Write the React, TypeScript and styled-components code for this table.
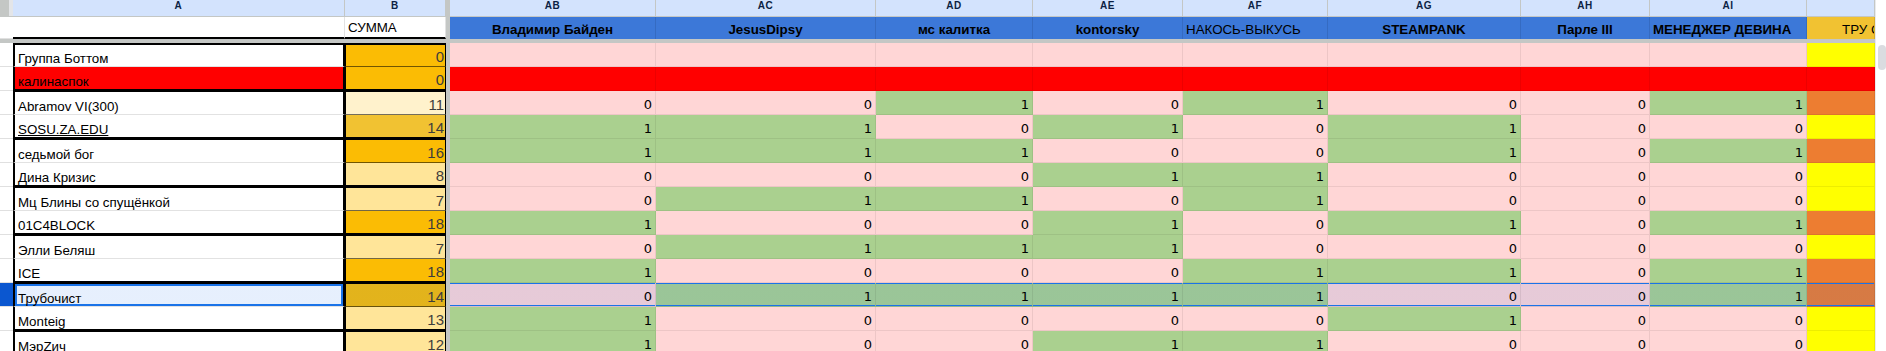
import styled, { createGlobalStyle, css } from "styled-components";

const COLS =
  "13px 332px 101px 4px 206px 220px 157px 150px 145px 193px 129px 157px 68px";

const PINK = "#ffd6d6";
const GREEN = "#aad08f";
const RED = "#ff0000";
const YELLOW = "#ffff00";
const ORANGE = "#ed7d31";

// row selection overlay, as Sheets does it
const selectedTint = css`
  background-image: linear-gradient(
    rgba(14, 101, 235, 0.1),
    rgba(14, 101, 235, 0.1)
  );
`;

const GlobalStyle = createGlobalStyle`
  html, body {
    margin: 0;
    padding: 0;
    background: #fff;
    overflow: hidden;
  }
  body {
    font-family: "Liberation Sans", Arial, sans-serif;
  }
`;

const Page = styled.div`
  display: flex;
  width: 1886px;
  height: 351px;
  overflow: hidden;
`;

const Sheet = styled.div`
  width: 1875px;
  flex-shrink: 0;
  display: flex;
  flex-direction: column;
`;

const Row = styled.div<{ $h: number }>`
  display: grid;
  grid-template-columns: ${COLS};
  height: ${(p) => p.$h}px;
  flex-shrink: 0;
`;

const Corner = styled.div`
  background: linear-gradient(90deg, #c4c7c5 0 9px, #e3e5e8 9px);
  border-bottom: 1px solid #c4c7c5;
  box-sizing: border-box;
`;

const ColLetter = styled.div`
  box-sizing: border-box;
  background: #d3e3fd;
  border-right: 1px solid #c4c7c5;
  border-bottom: 1px solid #c4c7c5;
  display: flex;
  justify-content: center;
  font-family: "Liberation Sans", Arial, sans-serif;
  font-weight: bold;
  font-size: 10px;
  line-height: 12px;
  letter-spacing: 0.6px;
  color: #0b1f44;
`;

const FreezeV = styled.div`
  background: #c4c7c5;
`;

const FreezeH = styled.div`
  height: 4px;
  flex-shrink: 0;
  background: #c4c7c5;
`;

const Gutter = styled.div<{ $selected?: boolean }>`
  box-sizing: border-box;
  background: ${(p) => (p.$selected ? "#0b57d0" : "#fff")};
  border-bottom: 1px solid #e0e0e0;
`;

const TitleCell = styled.div`
  box-sizing: border-box;
  background: #fff;
  border-right: 1px solid #e2e2e2;
  border-bottom: 2px solid #000;
  display: flex;
  align-items: flex-end;
  padding: 0 3px 2px;
  font-size: 13.33px;
  line-height: 15px;
  color: #000;
`;

const VoterHead = styled.div<{ $bold?: boolean; $left?: boolean }>`
  box-sizing: border-box;
  background: #3c78d8;
  border-right: 1px solid rgba(0, 0, 0, 0.1);
  display: flex;
  align-items: flex-end;
  justify-content: ${(p) => (p.$left ? "flex-start" : "center")};
  padding: 0 3px 2px;
  font-size: 13.33px;
  line-height: 15px;
  font-weight: ${(p) => (p.$bold ? "bold" : "normal")};
  color: #000;
  white-space: nowrap;
  overflow: hidden;
`;

const ExtraHead = styled(VoterHead)`
  background: #f1c232;
  justify-content: flex-start;
  padding-left: 35px;
`;

const NameCell = styled.div<{
  $first?: boolean;
  $top?: number;
  $red?: boolean;
  $selected?: boolean;
  $link?: boolean;
}>`
  box-sizing: border-box;
  background-color: ${(p) => (p.$red ? RED : "#fff")};
  border-left: 2px solid #000;
  border-right: 2px solid #000;
  border-top: ${(p) => (p.$first ? `${p.$top ?? 1}px solid #000` : "none")};
  border-bottom: ${(p) => (p.$first ? "1px solid #e2e2e2" : "2px solid #000")};
  display: flex;
  align-items: flex-end;
  padding: 0 3px;
  font-size: 13.33px;
  line-height: 15px;
  color: #000;
  white-space: nowrap;
  overflow: hidden;
  text-decoration: ${(p) => (p.$link ? "underline" : "none")};
  ${(p) =>
    p.$selected &&
    css`
      ${selectedTint};
      box-shadow: inset 0 0 0 2px #1a73e8;
    `}
`;

const SumCell = styled.div<{
  $bg: string;
  $first?: boolean;
  $top?: number;
  $selected?: boolean;
}>`
  box-sizing: border-box;
  background-color: ${(p) => p.$bg};
  border-left: 1px solid #000;
  border-right: 1px solid #000;
  border-top: ${(p) => (p.$first ? `${p.$top ?? 1}px solid #000` : "none")};
  border-bottom: ${(p) =>
    p.$first ? "1px solid rgba(0,0,0,0.55)" : "2px solid #000"};
  display: flex;
  align-items: flex-end;
  justify-content: flex-end;
  padding: 0 1px 1px;
  font-size: 15px;
  line-height: 17px;
  color: #3d3d3d;
  ${(p) => p.$selected && selectedTint};
`;

const VoteCell = styled.div<{ $fill: string; $selected?: boolean }>`
  box-sizing: border-box;
  background-color: ${(p) => p.$fill};
  border-right: 1px solid rgba(0, 0, 0, 0.07);
  border-bottom: 1px solid rgba(0, 0, 0, 0.07);
  display: flex;
  align-items: flex-end;
  justify-content: flex-end;
  padding: 0 3px 2px;
  font-family: "DejaVu Sans", Verdana, sans-serif;
  font-size: 13px;
  line-height: 15px;
  color: #000;
  ${(p) =>
    p.$selected &&
    css`
      ${selectedTint};
      box-shadow: inset 0 1px 0 #1a73e8, inset 0 -1px 0 #1a73e8;
    `}
`;

const Scrollbar = styled.div`
  width: 11px;
  flex-shrink: 0;
  box-sizing: border-box;
  border-left: 1px solid #e8eaed;
  background: #fff;
  padding-top: 45px;
`;

const Thumb = styled.div`
  width: 8px;
  height: 25px;
  margin-left: 2px;
  border-radius: 4px;
  background: #dadce0;
`;

const letters = ["AB", "AC", "AD", "AE", "AF", "AG", "AH", "AI", ""];

const voters = [
  { title: "Владимир Байден", bold: true },
  { title: "JesusDipsy", bold: true },
  { title: "мс калитка", bold: true },
  { title: "kontorsky", bold: true },
  { title: "НАКОСЬ-ВЫКУСЬ", bold: false, left: true },
  { title: "STEAMPANK", bold: true },
  { title: "Парле III", bold: true },
  { title: "МЕНЕДЖЕР ДЕВИНА", bold: true, left: true },
];

type Entry = {
  name: string;
  sum: number;
  sumBg: string;
  votes?: string;
  red?: boolean;
  link?: boolean;
  selected?: boolean;
};

const entries: Entry[] = [
  { name: "Группа Боттом", sum: 0, sumBg: "#fbbc04" },
  { name: "калинаспок", sum: 0, sumBg: "#fbbc04", red: true },
  { name: "Abramov VI(300)", sum: 11, sumBg: "#fff2cc", votes: "00101001" },
  { name: "SOSU.ZA.EDU", sum: 14, sumBg: "#f1c232", votes: "11010100", link: true },
  { name: "седьмой бог", sum: 16, sumBg: "#fbbc04", votes: "11100101" },
  { name: "Дина Кризис", sum: 8, sumBg: "#ffe599", votes: "00011000" },
  { name: "Мц Блины со спущёнкой", sum: 7, sumBg: "#ffe599", votes: "01101000" },
  { name: "01C4BLOCK", sum: 18, sumBg: "#fbbc04", votes: "10010101" },
  { name: "Элли Беляш", sum: 7, sumBg: "#ffe599", votes: "01110000" },
  { name: "ICE", sum: 18, sumBg: "#fbbc04", votes: "10001101" },
  { name: "Трубочист", sum: 14, sumBg: "#fbbc04", votes: "01111001", selected: true },
  { name: "Monteig", sum: 13, sumBg: "#ffe599", votes: "10000100" },
  { name: "МэрZич", sum: 12, sumBg: "#ffe599", votes: "10011000" },
];

const voteFill = (e: Entry, i: number) => {
  if (e.red) return RED;
  if (!e.votes) return PINK;
  return e.votes[i] === "1" ? GREEN : PINK;
};

const extraFill = (e: Entry) => {
  if (e.red) return RED;
  if (!e.votes) return YELLOW;
  return e.votes[7] === "1" ? ORANGE : YELLOW;
};

export default function App() {
  return (
    <>
      <GlobalStyle />
      <Page>
        <Sheet>
          <Row $h={17}>
            <Corner />
            <ColLetter>A</ColLetter>
            <ColLetter>B</ColLetter>
            <FreezeV />
            {letters.map((l, i) => (
              <ColLetter key={i}>{l}</ColLetter>
            ))}
          </Row>
          <Row $h={22}>
            <Gutter />
            <TitleCell />
            <TitleCell>СУММА</TitleCell>
            <FreezeV />
            {voters.map((v) => (
              <VoterHead key={v.title} $bold={v.bold} $left={v.left}>
                {v.title}
              </VoterHead>
            ))}
            <ExtraHead>ТРУ СТОРИ</ExtraHead>
          </Row>
          <FreezeH />
          {entries.map((e, idx) => {
            const first = idx % 2 === 0;
            const top = idx === 0 ? 2 : 1;
            return (
              <Row $h={24} key={e.name}>
                <Gutter $selected={e.selected} />
                <NameCell
                  $first={first}
                  $top={top}
                  $red={e.red}
                  $link={e.link}
                  $selected={e.selected}
                >
                  {e.name}
                </NameCell>
                <SumCell
                  $bg={e.sumBg}
                  $first={first}
                  $top={top}
                  $selected={e.selected}
                >
                  {e.sum}
                </SumCell>
                <FreezeV />
                {voters.map((v, i) => (
                  <VoteCell
                    key={v.title}
                    $fill={voteFill(e, i)}
                    $selected={e.selected}
                  >
                    {e.votes ? e.votes[i] : ""}
                  </VoteCell>
                ))}
                <VoteCell $fill={extraFill(e)} $selected={e.selected} />
              </Row>
            );
          })}
        </Sheet>
        <Scrollbar>
          <Thumb />
        </Scrollbar>
      </Page>
    </>
  );
}
